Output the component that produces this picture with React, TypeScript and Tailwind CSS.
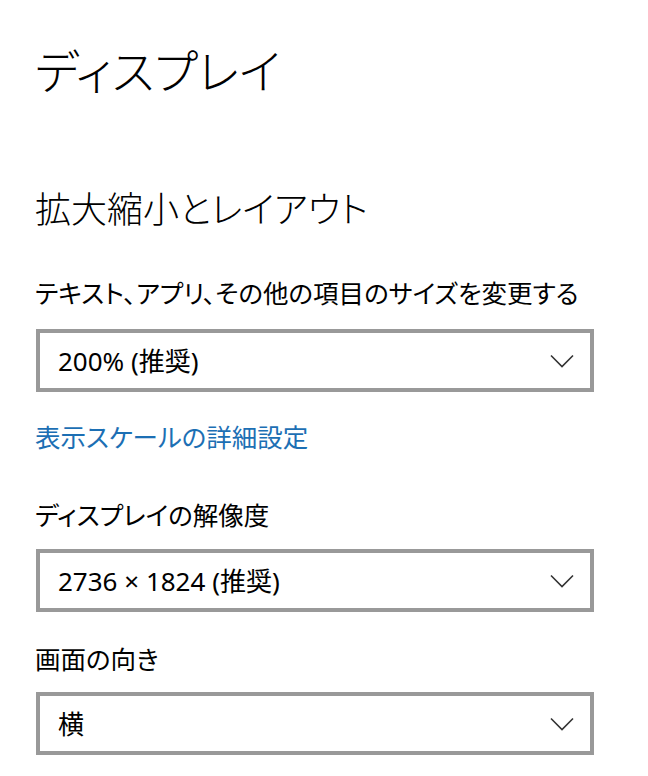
import { ReactNode } from "react";

function Chevron() {
  return (
    <svg width="24" height="14" viewBox="0 0 24 14" fill="none" className="shrink-0">
      <path d="M1 1.5 L12 12.5 L23 1.5" stroke="#333333" strokeWidth="1.6" />
    </svg>
  );
}

function Dropdown({ children }: { children: ReactNode }) {
  return (
    <div className="flex items-center justify-between w-[558px] h-[63px] border-4 border-[#999999] bg-white pl-[18px] pr-[16px]">
      <span className="text-[26px] text-black leading-none font-['Noto_Sans','Noto_Sans_CJK_JP',sans-serif]">{children}</span>
      <Chevron />
    </div>
  );
}

export default function App() {
  return (
    <div className="w-[648px] h-[776px] bg-white overflow-hidden pl-[35px] font-['Yu_Gothic_UI','Noto_Sans_CJK_JP',sans-serif] [font-feature-settings:'palt'] text-black">
      <h1 className="pt-[31px] text-[47px] leading-[76px] font-light">ディスプレイ</h1>

      <h2 className="mt-[73px] text-[36px] leading-[54px] font-light">拡大縮小とレイアウト</h2>

      <p className="mt-[40px] text-[25.5px] leading-[36px]">テキスト、アプリ、その他の項目のサイズを変更する</p>
      <div className="mt-[19px] ml-px">
        <Dropdown>200% (推奨)</Dropdown>
      </div>

      <p className="mt-[26px] text-[25.5px] leading-[36px] text-[#1c6fb4]">表示スケールの詳細設定</p>

      <p className="mt-[42px] text-[25.5px] leading-[36px]">ディスプレイの解像度</p>
      <div className="mt-[17px] ml-px">
        <Dropdown>2736 × 1824 (推奨)</Dropdown>
      </div>

      <p className="mt-[28px] text-[25.5px] leading-[36px]">画面の向き</p>
      <div className="mt-[16px] ml-px">
        <Dropdown>横</Dropdown>
      </div>
    </div>
  );
}
